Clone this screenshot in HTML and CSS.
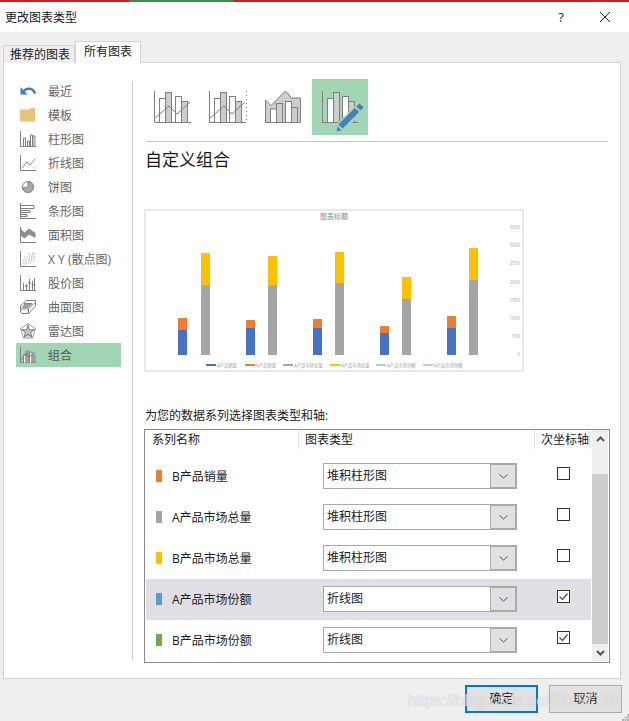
FILE: index.html
```html
<!DOCTYPE html>
<html lang="zh-CN">
<head>
<meta charset="utf-8">
<title>更改图表类型</title>
<link rel="stylesheet" href="styles.css">
</head>
<body>
<div class="dialog">
  <div class="accent"><i class="red-a"></i><i class="green"></i><i class="red-b"></i></div>
  <header class="titlebar">
    <span class="title">更改图表类型</span>
    <span class="help">?</span>
    <svg class="close" width="12" height="12" viewBox="0 0 12 12"><path d="M1 1L11 11M11 1L1 11"/></svg>
  </header>
  <div class="tabs">
    <span class="tab">推荐的图表</span>
    <span class="tab active">所有图表</span>
  </div>
  <section class="panel">
    <nav class="side">
      <ul class="side-list">
        <li class="side-item"><svg class="si" viewBox="0 0 16 16"><path class="blue-f" d="M0.5 4V11.5H7.5Z"/><path class="blue-s" d="M3.5 8.5C6.5 4.5 13 4.5 15 10.5"/></svg>最近</li>
        <li class="side-item"><svg class="si" viewBox="0 0 16 16"><path class="folder" d="M0 2.5H9L11 1H15V14.5H0Z"/></svg>模板</li>
        <li class="side-item"><svg class="si" viewBox="0 0 16 16"><path d="M.5 0V15.5H16M3.5 15V7H5.5V15M7.5 15V10H9.5V15M10.5 15V4H12.5V15M13 15V5H15V15"/></svg>柱形图</li>
        <li class="side-item"><svg class="si" viewBox="0 0 16 16"><path d="M.5 0V15.5H16"/><path class="lt" d="M2 13L7 7L10 10L15 4"/><path class="lt2" d="M3 8L7 6L12 12L15 13"/></svg>折线图</li>
        <li class="side-item"><svg class="si" viewBox="0 0 16 16"><circle cx="8" cy="8" r="5.5"/><path class="gf" d="M8 8V2.5A5.5 5.5 0 1 1 2.5 9Z"/></svg>饼图</li>
        <li class="side-item"><svg class="si" viewBox="0 0 16 16"><path d="M.5 0V15.5H16M.5 2.5H14V5.5H.5M.5 7.5H10V9.5H.5M.5 11.5H7V13.5H.5"/></svg>条形图</li>
        <li class="side-item"><svg class="si" viewBox="0 0 16 16"><path d="M.5 0V15.5H16"/><path class="df" d="M0.5 1.5L4.5 5.5L9 1.5L15.5 6V11L9 7.5L4.5 11.5L0.5 8.5Z"/></svg>面积图</li>
        <li class="side-item"><svg class="si" viewBox="0 0 16 16"><path d="M.5 0V15.5H16"/><path class="dots" d="M3 12h1M5 9h1M6 12h1M7 6h1M8 10h1M9 7h1M10 4h1M10 12h1M11 8h1M12 5h1M13 10h1M14 3h1M4 6h1M12 2h1M8 3h1M3 9h1M5 11h1M6 8h1M8 12h1M9 5h1M9 9h1M11 6h1M11 10h1M13 7h1M13 3h1M14 6h1M4 13h1"/></svg>X Y (散点图)</li>
        <li class="side-item"><svg class="si" viewBox="0 0 16 16"><path d="M.5 0V15.5H16M3.5 15V8M6.5 15V9M5 11H8M9.5 15V4M8 8H11M12.5 15V6M14.5 15V3M11.5 10H15.5"/></svg>股价图</li>
        <li class="side-item"><svg class="si" viewBox="0 0 16 16"><path d="M.5 7L6 1.500H15.5V7L8.5 14.500H2L.5 13ZM.5 10H8.500L15 3.500M4 4.500H12M8.5 10V14.500"/><path class="gf" d="M5 5H11.500L8 8.500H2.500Z"/></svg>曲面图</li>
        <li class="side-item"><svg class="si" viewBox="0 0 16 16"><path class="soft" d="M8 .5L15.5 6L12.5 15H3.5L.5 6ZM8 .5V15M.5 6L12.5 15M15.5 6L3.5 15"/><path class="star" d="M8 2.500L9.500 7L14 6.500L10.500 9.500L12 14L8 11L4 14L5.500 9.500L2 6.500L6.500 7Z"/></svg>雷达图</li>
        <li class="side-item selected"><svg class="si" viewBox="0 0 16 16"><path d="M.5 0V15.5H16"/><path class="wf" d="M3.5 15.5V8H6V15.5M9.5 15.5V5H12V15.5"/><path class="gf" d="M6 15.5V4H9V15.5M12 15.5V8H15V15.5"/><path d="M1 13L6 6L9 10L15 5"/></svg>组合</li>
      </ul>
    </nav>
    <main class="content">
      <div class="types">
        <span class="type"><svg width="56" height="56" viewBox="0 0 56 56"><path d="M10.5 12V43.5H47"/><rect class="wf" x="15.5" y="19.5" width="6" height="24"/><rect class="gf2" x="21.5" y="13.5" width="6" height="30"/><rect class="wf" x="31.5" y="17.5" width="6" height="26"/><rect class="gf2" x="37.5" y="22.5" width="6" height="21"/><path d="M10 40L25 27L33 35L46 23"/></svg></span>
        <span class="type"><svg width="56" height="56" viewBox="0 0 56 56"><path d="M9.5 12V43.5H46"/><rect class="wf" x="14.5" y="19.5" width="6" height="24"/><rect class="gf2" x="20.5" y="13.5" width="6" height="30"/><rect class="wf" x="29.5" y="17.5" width="6" height="26"/><rect class="gf2" x="35.5" y="22.5" width="6" height="21"/><path d="M9 40L24 27L32 35L45 23"/><path class="dotted" d="M46.5 12V44"/></svg></span>
        <span class="type"><svg width="56" height="56" viewBox="0 0 56 56"><path class="gf2" d="M9.5 21L15 26.5L29.5 12L35.5 19H44.5V43.5H9.5Z"/><rect class="wf" x="14.5" y="30" width="6" height="13.5"/><rect class="gf2" x="20.5" y="24.5" width="6" height="19"/><rect class="wf" x="29.5" y="22.5" width="6" height="21"/><rect class="gf2" x="35.5" y="28.5" width="6" height="15"/></svg></span>
        <span class="type current"><svg width="56" height="56" viewBox="0 0 56 56"><path d="M10.5 12V43.5H46"/><rect class="wf" x="15.5" y="19.5" width="6" height="24"/><rect class="gf2" x="21.5" y="13.5" width="6" height="30"/><rect class="wf" x="30.5" y="17.5" width="6" height="26"/><rect class="gf2" x="36.5" y="22.5" width="6" height="21"/><path class="halo" d="M28 49L47 30"/><path class="pen" d="M28.500 47.500L45 31"/><path class="pen-end" d="M46.500 29.500L49.500 26.500"/><path class="blue-f" d="M24.500 52.500L25.500 47.500L29.500 51.500Z"/></svg></span>
      </div>
      <hr class="rule">
      <h1 class="heading">自定义组合</h1>
      <div class="preview">
        <svg class="chart" width="376" height="159" viewBox="146 211 376 159">
          <text class="ct" x="334" y="219">图表标题</text>
          <g class="bl"><rect x="178" y="330" width="9" height="25"/><rect x="246" y="328" width="9" height="27"/><rect x="313" y="328" width="9" height="27"/><rect x="380" y="333" width="9" height="22"/><rect x="447" y="328" width="9" height="27"/></g>
          <g class="or"><rect x="178" y="318" width="9" height="12"/><rect x="246" y="320" width="9" height="8"/><rect x="313" y="319" width="9" height="9"/><rect x="380" y="326" width="9" height="7"/><rect x="447" y="316" width="9" height="12"/></g>
          <g class="gr"><rect x="201" y="285" width="9" height="70"/><rect x="268" y="285" width="9" height="70"/><rect x="335" y="283" width="9" height="72"/><rect x="402" y="299" width="9" height="56"/><rect x="469" y="280" width="9" height="75"/></g>
          <g class="ye"><rect x="201" y="253" width="9" height="32"/><rect x="268" y="256" width="9" height="29"/><rect x="335" y="252" width="9" height="31"/><rect x="402" y="277" width="9" height="22"/><rect x="469" y="248" width="9" height="32"/></g>
          <g class="ax"><text x="520" y="229">3500</text><text x="520" y="247">3000</text><text x="520" y="265">2500</text><text x="520" y="284">2000</text><text x="520" y="302">1500</text><text x="520" y="320">1000</text><text x="520" y="338">500</text><text x="520" y="356">0</text></g>
          <rect class="bl" x="206" y="364" width="10" height="2"/><rect class="or" x="245" y="364" width="10" height="2"/><rect class="gr" x="283" y="364" width="10" height="2"/><rect class="ye" x="330" y="364" width="10" height="2"/><rect class="lb" x="376" y="364.500" width="10" height="1"/><rect class="lg" x="423" y="364.500" width="10" height="1"/>
          <g class="lgd"><text x="217" y="367">A产品销量</text><text x="256" y="367">B产品销量</text><text x="294" y="367">A产品市场总量</text><text x="341" y="367">B产品市场总量</text><text x="387" y="367">A产品市场份额</text><text x="434" y="367">B产品市场份额</text></g>
        </svg>
      </div>
      <p class="prompt">为您的数据系列选择图表类型和轴:</p>
      <div class="series-box">
        <div class="series-main">
          <div class="series-head">
            <span class="h1">系列名称</span>
            <span class="h2">图表类型</span>
            <span class="h3">次坐标轴</span>
          </div>
          <div class="row">
            <span class="name"><i class="swatch c-or"></i>B产品销量</span>
            <span class="select"><span class="val">堆积柱形图</span><span class="drop"><svg width="9" height="5" viewBox="0 0 9 5"><path d="M.5 .5L4.500 4L8.500 .5"/></svg></span></span>
            <span class="check"></span>
          </div>
          <div class="row">
            <span class="name"><i class="swatch c-gr"></i>A产品市场总量</span>
            <span class="select"><span class="val">堆积柱形图</span><span class="drop"><svg width="9" height="5" viewBox="0 0 9 5"><path d="M.5 .5L4.500 4L8.500 .5"/></svg></span></span>
            <span class="check"></span>
          </div>
          <div class="row">
            <span class="name"><i class="swatch c-ye"></i>B产品市场总量</span>
            <span class="select"><span class="val">堆积柱形图</span><span class="drop"><svg width="9" height="5" viewBox="0 0 9 5"><path d="M.5 .5L4.500 4L8.500 .5"/></svg></span></span>
            <span class="check"></span>
          </div>
          <div class="row hot">
            <span class="name"><i class="swatch c-bl"></i>A产品市场份额</span>
            <span class="select"><span class="val">折线图</span><span class="drop"><svg width="9" height="5" viewBox="0 0 9 5"><path d="M.5 .5L4.500 4L8.500 .5"/></svg></span></span>
            <span class="check"><svg width="11" height="11" viewBox="0 0 11 11"><path d="M1.500 5.500L4.500 8.500L9.500 2.500"/></svg></span>
          </div>
          <div class="row">
            <span class="name"><i class="swatch c-gn"></i>B产品市场份额</span>
            <span class="select"><span class="val">折线图</span><span class="drop"><svg width="9" height="5" viewBox="0 0 9 5"><path d="M.5 .5L4.500 4L8.500 .5"/></svg></span></span>
            <span class="check"><svg width="11" height="11" viewBox="0 0 11 11"><path d="M1.500 5.500L4.500 8.500L9.500 2.500"/></svg></span>
          </div>
        </div>
        <div class="scroll">
          <span class="sbtn"><svg width="9" height="6" viewBox="0 0 9 6"><path d="M1 5L4.500 1.500L8 5"/></svg></span>
          <span class="strack"></span>
          <span class="sthumb"></span>
          <span class="sbtn"><svg width="9" height="6" viewBox="0 0 9 6"><path d="M1 1L4.500 4.500L8 1"/></svg></span>
        </div>
      </div>
    </main>
  </section>
  <footer class="foot">
    <span class="btn default">确定</span>
    <span class="btn">取消</span>
  </footer>
  <span class="watermark">https://blog.csdn.net/f2157120</span>
  <svg class="grip" width="7" height="7" viewBox="0 0 7 7"><path d="M5 0h2v2h-2zM2.500 2.500h2v2h-2zM5 2.500h2v2h-2zM0 5h2v2h-2zM2.500 5h2v2h-2zM5 5h2v2h-2z"/></svg>
</div>
</body>
</html>
```

FILE: styles.css
```css
* { box-sizing: border-box; }
html, body { margin: 0; padding: 0; }
body {
  font-family: "Open Sans", "Noto Sans CJK SC", sans-serif;
  font-size: 12px;
  color: #1a1a1a;
  background: #efefef;
}
.dialog {
  position: relative;
  width: 629px;
  height: 721px;
  overflow: hidden;
  display: flex;
  flex-direction: column;
  background: #efefef;
}
.accent { display: flex; height: 2px; flex: none; }
.accent i { display: block; height: 2px; }
.red-a { width: 129px; background: #c8201f; }
.green { width: 104px; background: #3f8c4a; }
.red-b { flex: 1; background: #c8201f; }

.titlebar {
  flex: none;
  height: 30px;
  background: #fff;
  display: flex;
  align-items: center;
  padding-left: 5px;
}
.title { flex: 1; font-size: 12px; line-height: 30px; padding-top: 1px; }
.help { width: 10px; font-size: 13px; line-height: 30px; margin: 0 33px 0 1px; text-align: center; color: #222; }
.close { margin-right: 18px; }
.close path { stroke: #222; stroke-width: 1; fill: none; }

.tabs {
  flex: none;
  display: flex;
  align-items: flex-end;
  height: 31px;
  padding: 9px 0 0 3px;
  margin-bottom: -1px;
  position: relative;
  z-index: 1;
}
.tab {
  width: 72px;
  height: 18px;
  padding-left: 2px;
  line-height: 17px;
  text-align: center;
  background: #efefef;
  border: 1px solid #d4d4d4;
  border-bottom: 0;
}
.tab.active {
  width: 66px;
  height: 22px;
  padding-left: 0;
  line-height: 20px;
  background: #fff;
  border-left: 1px solid #d4d4d4;
  border-width: 1px 1px 0;
}

.panel {
  flex: none;
  display: flex;
  width: 618px;
  height: 617px;
  margin-left: 3px;
  background: #fff;
  border: 1px solid #d4d4d4;
}
.side {
  flex: none;
  width: 129px;
  height: 579px;
  margin-top: 18px;
  border-right: 1px solid #c8c8c8;
}
.side-list {
  list-style: none;
  margin: -2px 0 0 12px;
  padding: 0;
  width: 105px;
}
.side-item {
  display: flex;
  align-items: center;
  gap: 12px;
  height: 24px;
  padding-left: 4px;
  color: #666;
  white-space: nowrap;
}
.side-item.selected { background: #a0d6b4; color: #555; }
.si { width: 16px; height: 16px; flex: none; }
svg path, svg rect, svg circle { stroke: #7f7f7f; fill: none; stroke-width: 1; }
.blue-f { fill: #4a7ebb; stroke: none; }
.blue-s { stroke: #4a7ebb; stroke-width: 2.500; }
.folder { fill: #e9c27d; stroke: none; }
.lt { stroke: #8a8a8a; }
.lt2 { stroke: #bbb; stroke-dasharray: 1 1; }
.gf { fill: #a6a6a6; stroke: #8a8a8a; }
.gf2 { fill: #cdcdcd; stroke: #7f7f7f; }
.wf { fill: #fff; stroke: #7f7f7f; }
.df { fill: #8c8c8c; stroke: none; }
.dots { stroke: #a8a8a8; }
.dotted { stroke-dasharray: 1 3; }
.soft { stroke: #a0a0a0; }
.star { fill: #c4c4c4; stroke: #7f7f7f; }

.content { flex: none; width: 487px; padding: 16px 0 0 11px; }
.types { display: flex; height: 56px; }
.type { width: 56px; height: 56px; flex: none; display: block; }
.type svg { display: block; }
.type.current { background: #a0d6b4; }
.halo { stroke: #a0d6b4; stroke-width: 10; }
.pen { stroke: #4a7ebb; stroke-width: 6; }
.pen-end { stroke: #4a7ebb; stroke-width: 6; }
.rule {
  width: 462px;
  height: 1px;
  margin: 6px 0 0 2px;
  border: 0;
  background: #c8c8c8;
}
.heading {
  margin: 6px 0 0 1px;
  font-size: 17px;
  font-weight: 400;
  line-height: 24px;
  height: 24px;
}
.preview {
  width: 380px;
  height: 163px;
  margin-top: 37px;
  border: 2px solid #e8e8e8;
  background: #fff;
}
.chart { display: block; }
.chart rect { stroke: none; }
.bl rect, rect.bl { fill: #4472c4; }
.or rect, rect.or { fill: #ed7d31; }
.gr rect, rect.gr { fill: #a5a5a5; }
.ye rect, rect.ye { fill: #ffc000; }
.lb { fill: #5b9bd5; }
.lg { fill: #70ad47; }
.ct { font-size: 7px; fill: #8a8a8a; text-anchor: middle; }
.ax text { font-size: 4.500px; fill: #a8a8a8; text-anchor: end; }
.lgd text { font-size: 4.300px; fill: #9a9a9a; }

.prompt { margin: 35px 0 0 1px; line-height: 18px; height: 18px; font-size: 12px; }
.series-box {
  display: flex;
  gap: 1px;
  width: 466px;
  height: 234px;
  margin-top: 4px;
  border: 1px solid #8a8a90;
  padding: 0 1px;
}
.series-main { width: 445px; flex: none; }
.series-head {
  display: grid;
  grid-template-columns: 153px 236px 55px;
  height: 26px;
}
.series-head span {
  display: block;
  height: 19px;
  line-height: 19px;
  white-space: nowrap;
}
.h1 { padding-left: 6px; border-right: 1px solid #e2e2e2; }
.h2 { padding-left: 6px; border-right: 1px solid #e2e2e2; }
.h3 { padding-left: 6px; border-right: 1px solid #e2e2e2; }
.row {
  display: grid;
  grid-template-columns: 177px 194px 1fr;
  align-items: start;
  height: 41px;
  padding-top: 7px;
}
.row.hot { background: #e0e0e4; }
.name {
  display: flex;
  align-items: center;
  gap: 10px;
  height: 26px;
  padding-left: 10px;
  white-space: nowrap;
}
.swatch { display: block; width: 6px; height: 12px; flex: none; }
.c-or { background: #ed7d31; }
.c-gr { background: #a5a5a5; }
.c-ye { background: #ffc000; }
.c-bl { background: #5b9bd5; }
.c-gn { background: #70ad47; }
.select {
  display: flex;
  height: 26px;
  background: #fff;
  border: 1px solid #aaa;
}
.val { flex: 1; padding-left: 3px; line-height: 23px; white-space: nowrap; }
.drop {
  flex: none;
  width: 27px;
  margin: -1px -1px -1px 0;
  display: flex;
  align-items: center;
  justify-content: center;
  background: #e1e1e1;
  border: 2px solid #aaa;
  border-left-width: 1px;
}
.hot .drop { background: #dfdfe3; }
.drop path { stroke: #555; }
.check {
  display: flex;
  align-items: center;
  justify-content: center;
  width: 13px;
  height: 13px;
  margin: 4px 0 0 40px;
  border: 1px solid #333;
  background: #fff;
}
.check svg { display: block; }
.check path { stroke: #555; stroke-width: 1.300; }

.scroll { width: 16px; flex: none; display: flex; flex-direction: column; height: 231px; }
.sbtn {
  flex: none;
  height: 17px;
  background: #efefef;
  display: flex;
  align-items: center;
  justify-content: center;
}
.sbtn path { stroke: #555; stroke-width: 2; }
.strack { flex: none; height: 27px; background: #efefef; }
.sthumb { flex: none; height: 170px; background: #cdcdcd; }

.foot {
  flex: 1;
  display: flex;
  justify-content: flex-end;
  align-items: flex-start;
  gap: 11px;
  padding: 6px 7px 0 0;
}
.btn {
  width: 73px;
  height: 28px;
  line-height: 26px;
  text-align: center;
  background: #e1e1e1;
  border: 1px solid #adadad;
}
.btn.default { border: 2px solid #0078d7; line-height: 24px; }
.watermark {
  position: absolute;
  left: 408px;
  top: 691px;
  font-family: "Liberation Sans", sans-serif;
  font-size: 15.800px;
  line-height: 20px;
  white-space: nowrap;
  color: rgba(255, 255, 255, .7);
  text-shadow: 0 0 1px rgba(100, 100, 100, .45);
}
.grip { position: absolute; right: 0; bottom: 0; }
.grip path { fill: #b5b5b5; stroke: none; }
```
